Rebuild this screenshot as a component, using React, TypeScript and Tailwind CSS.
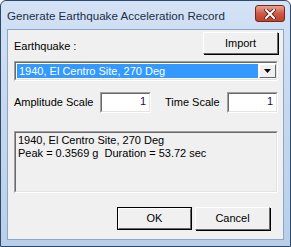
export default function App() {
  const font = { fontFamily: '"Liberation Sans", Arial, sans-serif' };
  return (
    <div
      className="w-[291px] h-[247px] overflow-hidden bg-gradient-to-b from-[#d3e2f5] via-[#c4d7ef] to-[#b9cfe9] border border-[#2e4a6b] rounded-t-[6px] flex flex-col"
      style={font}
    >
      {/* title bar */}
      <div className="h-[28px] flex items-start justify-between pl-[6px] pr-[5px] shrink-0">
        <span className="text-[11.6px] text-[#1c2e45] mt-[6px] whitespace-nowrap">
          Generate Earthquake Acceleration Record
        </span>
        <button className="mt-[4px] w-[30px] h-[17px] rounded-[3px] border border-[#6e2a22] bg-gradient-to-b from-[#e8a292] via-[#cf5a45] to-[#c0402c] flex items-center justify-center">
          <svg width="12" height="10" viewBox="0 0 12 10">
            <path d="M2 1 L10 9 M10 1 L2 9" stroke="#4a1a14" strokeWidth="3.6" strokeLinecap="square" />
            <path d="M2 1 L10 9 M10 1 L2 9" stroke="#ffffff" strokeWidth="2" strokeLinecap="square" />
          </svg>
        </button>
      </div>

      {/* client area */}
      <div className="mx-[6px] mb-[6px] flex-1 border border-[#8ea6c4] bg-[#f0f0f0] text-[11px] text-black whitespace-nowrap">
        <div className="pl-[6px] pr-[5px] pt-[2px]">
          <div className="flex items-center justify-between h-[22px]">
            <span className="mt-[6px]">Earthquake :</span>
            <button className="w-[75px] h-[22px] bg-[#f0f0f0] border border-t-white border-l-white border-r-[#696969] border-b-[#696969] shadow-[1px_1px_0_#000]">
              Import
            </button>
          </div>

          <div className="mt-[7px] h-[20px] flex bg-white border border-t-[#a0a0a0] border-l-[#a0a0a0] border-r-white border-b-white">
            <div className="flex-1 flex border border-t-[#696969] border-l-[#696969] border-r-[#e3e3e3] border-b-[#e3e3e3] p-[1px] pr-0">
              <div className="flex-1 bg-[#3399ff] text-white pl-[2px] leading-[15px]">
                1940, El Centro Site, 270 Deg
              </div>
              <div className="w-[17px] ml-[1px] bg-[#f0f0f0] border border-t-white border-l-white border-r-[#696969] border-b-[#696969] flex items-center justify-center">
                <svg width="7" height="4" viewBox="0 0 7 4">
                  <path d="M0 0 H7 L3.5 4 Z" fill="#000" />
                </svg>
              </div>
            </div>
          </div>

          <div className="mt-[11px] flex items-center h-[21px]">
            <span className="w-[86px]">Amplitude Scale</span>
            <div className="w-[51px] h-[21px] bg-white border border-t-[#a0a0a0] border-l-[#a0a0a0] border-r-white border-b-white">
              <div className="h-full border border-t-[#696969] border-l-[#696969] border-r-[#e3e3e3] border-b-[#e3e3e3] text-right pr-[3px] leading-[14px] text-[#1a1050]">
                1
              </div>
            </div>
            <span className="ml-[14px] w-[62px]">Time Scale</span>
            <div className="w-[51px] h-[21px] bg-white border border-t-[#a0a0a0] border-l-[#a0a0a0] border-r-white border-b-white">
              <div className="h-full border border-t-[#696969] border-l-[#696969] border-r-[#e3e3e3] border-b-[#e3e3e3] text-right pr-[3px] leading-[14px] text-[#1a1050]">
                1
              </div>
            </div>
          </div>

          <div className="mt-[18px] h-[62px] border border-t-[#a0a0a0] border-l-[#a0a0a0] border-r-white border-b-white">
            <div className="h-full border border-t-[#696969] border-l-[#696969] border-r-[#e3e3e3] border-b-[#e3e3e3] px-[2px] pt-[1px] leading-[13px]">
              <div>1940, El Centro Site, 270 Deg</div>
              <div>Peak = 0.3569 g&nbsp; Duration = 53.72 sec</div>
            </div>
          </div>

          <div className="mt-[14px] flex justify-end gap-[3px] pr-[8px]">
            <button className="w-[75px] h-[23px] bg-[#f0f0f0] border border-black">
              <div className="h-full border border-t-white border-l-white border-r-[#696969] border-b-[#696969] leading-[19px]">
                OK
              </div>
            </button>
            <button className="w-[75px] h-[23px] bg-[#f0f0f0] border border-t-white border-l-white border-r-[#696969] border-b-[#696969] shadow-[1px_1px_0_#000]">
              Cancel
            </button>
          </div>
        </div>
      </div>
    </div>
  );
}
